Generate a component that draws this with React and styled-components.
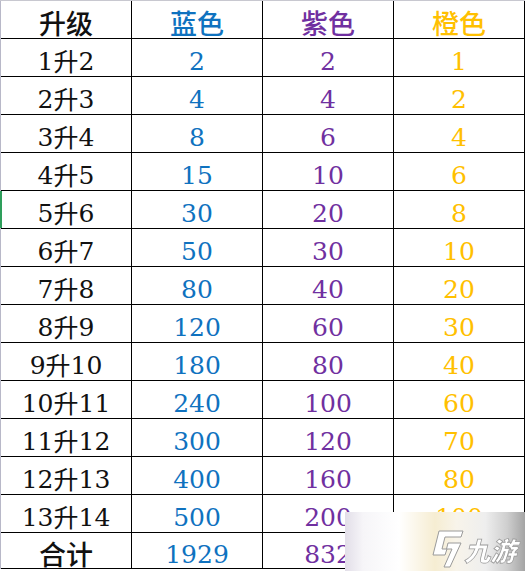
import { Fragment } from "react";
import styled, { createGlobalStyle } from "styled-components";

const Global = createGlobalStyle`
  body {
    margin: 0;
    background: #fff;
  }
`;

const Sheet = styled.div`
  position: relative;
  width: 525px;
  height: 571px;
  overflow: hidden;
  background: #fff;
  border-top: 1px solid #c8c8d0;
  box-sizing: border-box;
`;

const Grid = styled.div`
  display: grid;
  grid-template-columns: 131px 131px 131px 131px;
  grid-template-rows: repeat(14, 38px) 36px;
  width: 524px;
  border-left: 1px solid #b8b8c8;
  box-sizing: border-box;
`;

const Cell = styled.div`
  display: flex;
  align-items: center;
  justify-content: center;
  box-sizing: border-box;
  border-right: 1.5px solid #000;
  border-bottom: 1.5px solid #000;
  font-family: "DejaVu Serif", serif;
  font-size: 25px;
  line-height: 1;
  color: ${(p) => p.$color || "#111"};
  padding-top: 7px;
`;

const Han = styled.span`
  font-family: "Noto Sans CJK SC", sans-serif;
  font-size: ${(p) => (p.$big ? "27px" : "25px")};
  font-weight: ${(p) => (p.$big ? 500 : 400)};
  line-height: 1;
  position: relative;
  top: -1px;
`;

const Marker = styled.div`
  position: absolute;
  left: 0;
  top: 190px;
  width: 2px;
  height: 37px;
  background: #2e9e5b;
`;

const Watermark = styled.div`
  position: absolute;
  left: 345px;
  top: 511px;
  width: 180px;
  height: 60px;
  display: flex;
  align-items: center;
  justify-content: flex-end;
  gap: 3px;
  padding: 14px 6px 0 0;
  box-sizing: border-box;
  background: linear-gradient(
    90deg,
    #e2dee8 0%,
    #f6f5f8 10%,
    #ffffff 30%,
    #f6edd2 50%,
    #f8f4ea 62%,
    #eeeeee 78%,
    #cfcfcf 90%,
    #a4a4a4 100%
  );
  filter: blur(0.3px);
`;

const Brand = styled.span`
  font-family: "Noto Sans CJK SC", sans-serif;
  font-size: 26px;
  font-weight: 900;
  color: #fff;
  display: inline-block;
  transform: skewX(-14deg);
  -webkit-text-stroke: 0.8px #9a9a9a;
`;

const colors = {
  blue: "#0f72bf",
  purple: "#7030a0",
  gold: "#ffc000",
};

const rows = [
  ["1升2", 2, 2, 1],
  ["2升3", 4, 4, 2],
  ["3升4", 8, 6, 4],
  ["4升5", 15, 10, 6],
  ["5升6", 30, 20, 8],
  ["6升7", 50, 30, 10],
  ["7升8", 80, 40, 20],
  ["8升9", 120, 60, 30],
  ["9升10", 180, 80, 40],
  ["10升11", 240, 100, 60],
  ["11升12", 300, 120, 70],
  ["12升13", 400, 160, 80],
  ["13升14", 500, 200, 100],
];

function Label({ text, big }) {
  return text.split(/([\u4e00-\u9fff]+)/).map((part, i) =>
    /[\u4e00-\u9fff]/.test(part) ? (
      <Han key={i} $big={big}>
        {part}
      </Han>
    ) : (
      part
    )
  );
}

function Logo() {
  return (
    <svg width="32" height="38" viewBox="-1 -1 32 38">
      <path
        d="M6 0 L30 0 L28 6 L12 6 L9 18 L14 18 L12 24 L0 24 Z"
        fill="#fff"
        stroke="#9a9a9a"
        strokeWidth="1"
        strokeLinejoin="round"
      />
      <path
        d="M15 12 L28 12 L17 36 L11 36 L19 18 L13.5 18 Z"
        fill="#fff"
        stroke="#9a9a9a"
        strokeWidth="1"
        strokeLinejoin="round"
      />
    </svg>
  );
}

export default function App() {
  return (
    <>
      <Global />
      <Sheet>
        <Grid>
          <Cell>
            <Label text="升级" big />
          </Cell>
          <Cell $color={colors.blue}>
            <Label text="蓝色" big />
          </Cell>
          <Cell $color={colors.purple}>
            <Label text="紫色" big />
          </Cell>
          <Cell $color={colors.gold}>
            <Label text="橙色" big />
          </Cell>
          {rows.map(([label, b, p, o]) => (
            <Fragment key={label}>
              <Cell>
                <Label text={label} />
              </Cell>
              <Cell $color={colors.blue}>{b}</Cell>
              <Cell $color={colors.purple}>{p}</Cell>
              <Cell $color={colors.gold}>{o}</Cell>
            </Fragment>
          ))}
          <Cell>
            <Label text="合计" big />
          </Cell>
          <Cell $color={colors.blue}>1929</Cell>
          <Cell $color={colors.purple}>832</Cell>
          <Cell $color={colors.gold}>410</Cell>
        </Grid>
        <Marker />
        <Watermark>
          <Logo />
          <Brand>九游</Brand>
        </Watermark>
      </Sheet>
    </>
  );
}
